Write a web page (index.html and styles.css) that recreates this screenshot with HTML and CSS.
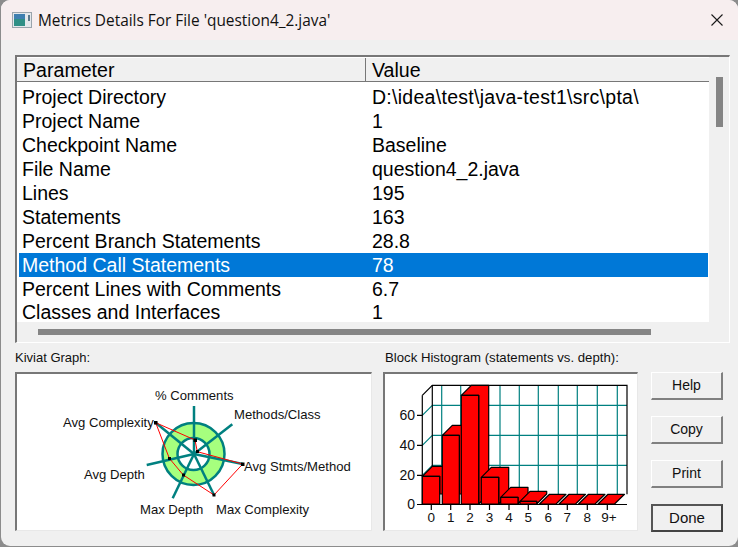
FILE: index.html
```html
<!DOCTYPE html>
<html lang="en">
<head>
<meta charset="utf-8">
<title>Metrics Details</title>
<link rel="stylesheet" href="styles.css">
</head>
<body>
<div class="window">
  <header class="titlebar">
    <svg class="app-icon" width="20" height="16" viewBox="0 0 20 16">
      <rect x="0.5" y="0.5" width="19" height="15" fill="#e4e8ec" stroke="#9aa4ac"/>
      <rect x="2" y="2" width="11" height="12" fill="#2f8f86"/>
      <rect x="2" y="2" width="11" height="5" fill="#3f7fb0"/>
      <rect x="16" y="3" width="2" height="6" fill="#5c7a8c"/>
    </svg>
    <span class="title">Metrics Details For File 'question4_2.java'</span>
    <svg class="close" width="12" height="12" viewBox="0 0 12 12"><path d="M0.5 0.5L11.5 11.5M11.5 0.5L0.5 11.5" stroke="#1a1a1a" stroke-width="1.1" fill="none"/></svg>
  </header>
  <main class="content">
    <section class="list-frame">
      <div class="list-inner">
        <div class="list-main">
          <div class="list-head">
            <div class="head-cell head-param">Parameter</div>
            <div class="head-cell head-value">Value</div>
          </div>
          <div class="row"><span class="c1">Project Directory</span><span class="c2 path">D:\idea\test\java-test1\src\pta\</span></div>
          <div class="row"><span class="c1">Project Name</span><span class="c2">1</span></div>
          <div class="row"><span class="c1">Checkpoint Name</span><span class="c2">Baseline</span></div>
          <div class="row"><span class="c1">File Name</span><span class="c2">question4_2.java</span></div>
          <div class="row"><span class="c1">Lines</span><span class="c2">195</span></div>
          <div class="row"><span class="c1">Statements</span><span class="c2">163</span></div>
          <div class="row"><span class="c1">Percent Branch Statements</span><span class="c2">28.8</span></div>
          <div class="row selected"><span class="c1">Method Call Statements</span><span class="c2">78</span></div>
          <div class="row"><span class="c1">Percent Lines with Comments</span><span class="c2">6.7</span></div>
          <div class="row"><span class="c1">Classes and Interfaces</span><span class="c2">1</span></div>
        </div>
        <div class="vscroll"><div class="vthumb"></div></div>
      </div>
      <div class="hscroll"><div class="hthumb"></div></div>
    </section>
    <section class="lower">
      <div class="col-kiviat">
        <div class="caption">Kiviat Graph:</div>
        <div class="panel panel-kiviat">
          <svg class="chart" width="354" height="156" viewBox="17 374 354 156">
            <circle cx="193.5" cy="454" r="31" fill="#a6ff7e" stroke="#008080" stroke-width="2.5"/>
            <circle cx="193.5" cy="454" r="16" fill="#fff" stroke="#008080" stroke-width="2.5"/>
            <g stroke="#008080" stroke-width="2.5" fill="none">
              <path d="M194 454V406"/>
              <path d="M194 454L232.3 424.3"/>
              <path d="M194 454L242.7 464"/>
              <path d="M194 454L214 495"/>
              <path d="M194 454L172.7 498.3"/>
              <path d="M194 454L146.7 465"/>
              <path d="M194 454L155.7 422.7"/>
            </g>
            <polygon points="155.7,422.7 195,440 197.3,451.7 242.7,464 214,495 183.3,475 169.3,458.3" fill="none" stroke="#ff0000" stroke-width="1"/>
            <g fill="#000">
              <rect x="154" y="421" width="3.5" height="3.5"/>
              <rect x="193.5" y="438.5" width="3.5" height="3.5"/>
              <rect x="196" y="450" width="3" height="3"/>
              <rect x="241" y="462.5" width="3.5" height="3.5"/>
              <rect x="212.5" y="493.5" width="3" height="3"/>
              <rect x="182" y="473.5" width="3" height="3"/>
              <rect x="168" y="457" width="3" height="3"/>
            </g>
            <g class="kv-label">
              <text x="155" y="400">% Comments</text>
              <text x="234" y="419">Methods/Class</text>
              <text x="244" y="471">Avg Stmts/Method</text>
              <text x="216" y="514">Max Complexity</text>
              <text x="140" y="514">Max Depth</text>
              <text x="84" y="479">Avg Depth</text>
              <text x="63" y="427">Avg Complexity</text>
            </g>
          </svg>
        </div>
      </div>
      <div class="col-hist">
        <div class="caption">Block Histogram (statements vs. depth):</div>
        <div class="panel panel-hist">
          <svg class="chart" width="252" height="156" viewBox="385 374 252 156">
            <g stroke="#008080" stroke-width="1.2" fill="none">
              <path d="M432 405.3H627M432 435.3H627M432 465.3H627"/>
              <path d="M441.7 385V494M460.7 385V494M479.3 385V494M500 385V494M519.3 385V494M538.3 385V494M558.3 385V494M577.3 385V494M597.3 385V494M617.3 385V494"/>
              <path d="M422.3 415.3L432.3 405.3M422.3 445.3L432.3 435.3M422.3 475.3L432.3 465.3"/>
            </g>
            <g stroke="#000" stroke-width="1.2" fill="none">
              <path d="M422.3 395.3L432.3 385.3H627V494.3"/>
              <path d="M432.3 385.3V494.3"/>
              <path d="M422.3 395.3V505"/>
              <path d="M417 415.3H422.3M417 445.3H422.3M417 475.3H422.3M417 504.5H627"/>
              <path d="M431.3 504V510M450.7 504V510M470 504V510M489.5 504V510M509 504V510M528.3 504V510M548.3 504V510M567.3 504V510M587.3 504V510M607.3 504V510"/>
            </g>
            <g fill="#ff0000" stroke="#000" stroke-width="1.2" stroke-linejoin="round">
              <path d="M422.3 476.3L432.3 466.3H450V494H439.7V476.3Z"/><rect x="422.3" y="476.3" width="17.4" height="27.7"/>
              <path d="M442.3 435.3L452.3 425.3H469.3V494H459.3V435.3Z"/><rect x="442.3" y="435.3" width="17" height="68.7"/>
              <path d="M461.3 395.3L471.3 385.3H488.7V494L478.7 504V395.3Z"/><rect x="461.3" y="395.3" width="17.4" height="108.7"/>
              <path d="M481.3 477.3L491.3 467.3H508.7V494L498.7 504V477.3Z"/><rect x="481.3" y="477.3" width="17.4" height="26.7"/>
              <path d="M500.7 497.3L510.7 487.3H528V494L518 504V497.3Z"/><rect x="500.7" y="497.3" width="17.3" height="6.7"/>
              <path d="M520 501.3L530 491.3H546.7V494L536.7 504V501.3Z"/><rect x="520" y="501.3" width="16.7" height="2.7"/>
              <path d="M539.5 504L549.5 494.3H566L556 504Z"/>
              <path d="M559 504L569 494.3H585.5L575.5 504Z"/>
              <path d="M578.5 504L588.5 494.3H605L595 504Z"/>
              <path d="M598 504L608 494.3H624.5L614.5 504Z"/>
            </g>
            <g class="hg-y">
              <text x="415" y="420">60</text>
              <text x="415" y="450">40</text>
              <text x="415" y="480">20</text>
              <text x="415" y="509">0</text>
            </g>
            <g class="hg-x">
              <text x="431.3" y="522">0</text>
              <text x="450.7" y="522">1</text>
              <text x="470" y="522">2</text>
              <text x="489.5" y="522">3</text>
              <text x="509" y="522">4</text>
              <text x="528.3" y="522">5</text>
              <text x="548.3" y="522">6</text>
              <text x="567.3" y="522">7</text>
              <text x="587.3" y="522">8</text>
              <text x="609" y="522">9+</text>
            </g>
          </svg>
        </div>
      </div>
      <div class="buttons">
        <button class="btn">Help</button>
        <button class="btn">Copy</button>
        <button class="btn">Print</button>
        <button class="btn btn-default">Done</button>
      </div>
    </section>
  </main>
</div>
</body>
</html>
```
FILE: styles.css
```css
html, body {
  margin: 0;
  padding: 0;
  width: 738px;
  height: 547px;
  overflow: hidden;
  background: #8c8c8c;
}
.window {
  box-sizing: border-box;
  width: 737px;
  height: 546px;
  margin-left: 1px;
  border-radius: 9px;
  background: #f0f0f0;
  overflow: hidden;
  font-family: "Liberation Sans", Arial, sans-serif;
  color: #000;
}
.titlebar {
  height: 40px;
  background: #f7eeef;
  display: flex;
  align-items: center;
  padding: 0 15px 0 11px;
}
.app-icon {
  flex: none;
}
.title {
  margin-left: 6px;
  flex: 1;
  font-family: "Open Sans", sans-serif;
  font-size: 15.4px;
  color: #111;
}
.content {
  padding: 15px 7px 0 14px;
}
.list-frame {
  box-sizing: border-box;
  width: 715px;
  height: 288px;
  border-top: 2px solid #777;
  border-left: 2px solid #777;
  border-right: 1px solid #fff;
  border-bottom: 1px solid #fff;
}
.list-inner {
  display: flex;
  height: 265px;
}
.list-main {
  width: 692px;
  background: #fff;
}
.list-head {
  display: flex;
  height: 25px;
  background: #f0f0f0;
  border-bottom: 1px solid #777;
  border-top: 1px solid #fff;
  box-sizing: border-box;
  margin-bottom: 3px;
}
.head-cell {
  box-sizing: border-box;
  font-size: 19.6px;
  line-height: 24px;
}
.head-param {
  width: 349px;
  padding-left: 6px;
  border-right: 1px solid #777;
}
.head-value {
  padding-left: 6px;
}
.row {
  display: flex;
  height: 24px;
  font-size: 19.5px;
  line-height: 24px;
}
.row:last-child {
  height: 21px;
  line-height: 21px;
  padding-top: 1px;
  box-sizing: border-box;
}
.row.selected {
  background: #0078d7;
  color: #fff;
  margin: 0 1px 0 2px;
}
.row.selected .c1 {
  width: 353px;
  padding-left: 3px;
}
.c1 {
  box-sizing: border-box;
  width: 355px;
  padding-left: 5px;
  white-space: nowrap;
}
.c2 {
  white-space: nowrap;
}
.path {
  letter-spacing: 0.28px;
}
.vscroll {
  flex: 1;
  padding-top: 20px;
}
.vthumb {
  width: 7px;
  height: 50px;
  margin-left: 7px;
  background: #858585;
}
.hscroll {
  height: 20px;
  padding-top: 7px;
  box-sizing: border-box;
}
.hthumb {
  width: 613px;
  height: 6px;
  margin-left: 21px;
  background: #858585;
}
.lower {
  display: flex;
  margin-top: 7px;
  align-items: flex-start;
}
.col-kiviat {
  width: 368px;
}
.col-hist {
  width: 268px;
}
.caption {
  font-size: 13px;
  height: 22px;
  line-height: 16px;
  color: #111;
  white-space: nowrap;
}
.col-hist .caption {
  padding-left: 2px;
  font-size: 13.2px;
}
.panel {
  box-sizing: border-box;
  background: #fff;
  border-top: 2px solid #777;
  border-left: 2px solid #777;
  border-right: 1px solid #e8e8e8;
  border-bottom: 1px solid #e8e8e8;
  height: 159px;
}
.panel-kiviat {
  width: 357px;
}
.panel-hist {
  width: 255px;
}
.chart {
  display: block;
}
.kv-label text,
.hg-y text,
.hg-x text {
  font-family: "Liberation Sans", Arial, sans-serif;
  font-size: 13.1px;
  fill: #111;
}
.hg-y text {
  font-size: 14px;
  text-anchor: end;
}
.hg-x text {
  font-size: 13.5px;
  text-anchor: middle;
}
.buttons {
  display: flex;
  flex-direction: column;
  gap: 16px;
  padding-top: 22px;
}
.btn {
  box-sizing: border-box;
  width: 72px;
  height: 28px;
  padding: 0 0 2px;
  background: #f0f0f0;
  border-top: 1px solid #fff;
  border-left: 1px solid #fff;
  border-right: 2px solid #808080;
  border-bottom: 2px solid #808080;
  font-family: "Liberation Sans", Arial, sans-serif;
  font-size: 14px;
  color: #111;
}
.btn-default {
  border: 2px solid #555;
  border-right-color: #444;
  border-bottom-color: #444;
  font-size: 15px;
}
```
